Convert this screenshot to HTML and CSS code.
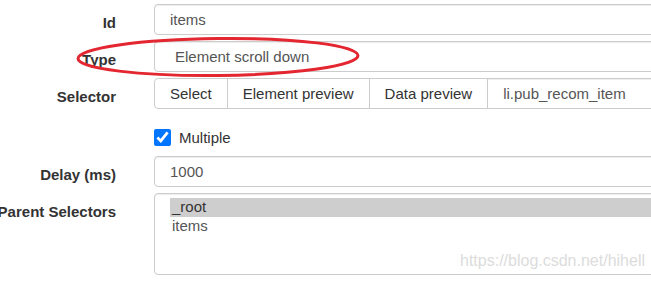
FILE: index.html
```html
<!DOCTYPE html>
<html lang="en">
<head>
  <meta charset="UTF-8">
  <meta name="viewport" content="width=device-width, initial-scale=1">
  <title>Edit selector</title>
  <link rel="stylesheet" href="styles.css">
</head>
<body>
  <form class="form">
    <div class="row">
      <label class="label">Id</label>
      <div class="field"><input type="text" class="control" value="items"></div>
    </div>
    <div class="row">
      <label class="label">Type</label>
      <div class="field">
        <select class="control select">
          <option>Element scroll down</option>
        </select>
      </div>
    </div>
    <div class="row">
      <label class="label">Selector</label>
      <div class="field">
        <div class="group">
          <button type="button" class="btn">Select</button>
          <button type="button" class="btn">Element preview</button>
          <button type="button" class="btn">Data preview</button>
          <input type="text" class="control group-input" value="li.pub_recom_item">
        </div>
      </div>
    </div>
    <div class="row check-row">
      <div></div>
      <div class="field">
        <label class="check"><input type="checkbox" checked> Multiple</label>
      </div>
    </div>
    <div class="row">
      <label class="label">Delay (ms)</label>
      <div class="field"><input type="text" class="control" value="1000"></div>
    </div>
    <div class="row">
      <label class="label">Parent Selectors</label>
      <div class="field">
        <div class="control listbox">
          <div class="option selected">_root</div>
          <div class="option">items</div>
        </div>
      </div>
    </div>
  </form>

  <!-- red hand-drawn mark round the Type row -->
  <svg class="mark" width="300" height="48" viewBox="0 0 300 48">
    <ellipse cx="143" cy="24" rx="140" ry="18.5" transform="rotate(-0.6 143 24)"
             fill="none" stroke="#e3262f" stroke-width="3"/>
  </svg>

  <div class="watermark">https://blog.csdn.net/hihell</div>
</body>
</html>
```

FILE: styles.css
```css
html, body {
  margin: 0;
  overflow: hidden;
  background: #fff;
}
body {
  font-family: "Liberation Sans", Arial, sans-serif;
  font-size: 15px;
  color: #333;
  position: relative;
  width: 651px;
  height: 282px;
}
.form {
  width: 720px;
  padding-top: 4px;
}
.row {
  display: grid;
  grid-template-columns: 116px 1fr;
  column-gap: 38px;
  margin-bottom: 6px;
}
.label {
  display: flex;
  justify-content: flex-end;
  white-space: nowrap;
  font-weight: bold;
  padding-top: 8px;
  line-height: 21px;
}
.control {
  display: block;
  width: 100%;
  height: 31px;
  box-sizing: border-box;
  padding: 0 15px;
  font-family: inherit;
  font-size: 15px;
  color: #555;
  background: #fff;
  border: 1px solid #ccc;
  border-radius: 4px;
  box-shadow: inset 0 1px 1px rgba(0, 0, 0, .075);
  outline: none;
}
.select {
  appearance: none;
  -webkit-appearance: none;
  padding-left: 20px;
}
.group {
  display: flex;
}
.btn {
  flex: none;
  height: 31px;
  padding: 0 15px;
  font-family: inherit;
  font-size: 15px;
  color: #333;
  background: #fff;
  border: 1px solid #ccc;
  border-radius: 0;
  margin-right: -1px;
}
.btn:first-child { border-radius: 4px 0 0 4px; }
.group-input {
  flex: 1;
  border-radius: 0 4px 4px 0;
}
.check-row {
  padding-top: 14px;
  padding-bottom: 4px;
}
.check {
  display: flex;
  align-items: center;
  gap: 8px;
  line-height: 17px;
}
.check input {
  width: 17px;
  height: 17px;
  margin: 0;
}
.listbox {
  height: 82px;
  padding: 4px 15px;
  line-height: 18.5px;
}
.option {
  padding: 0 2px;
}
.option.selected {
  background: #cecece;
  color: #333;
}
.mark {
  position: absolute;
  left: 75px;
  top: 33px;
}
.watermark {
  position: absolute;
  left: 460px;
  top: 252px;
  font-size: 16px;
  color: #dcdcdc;
}
```
